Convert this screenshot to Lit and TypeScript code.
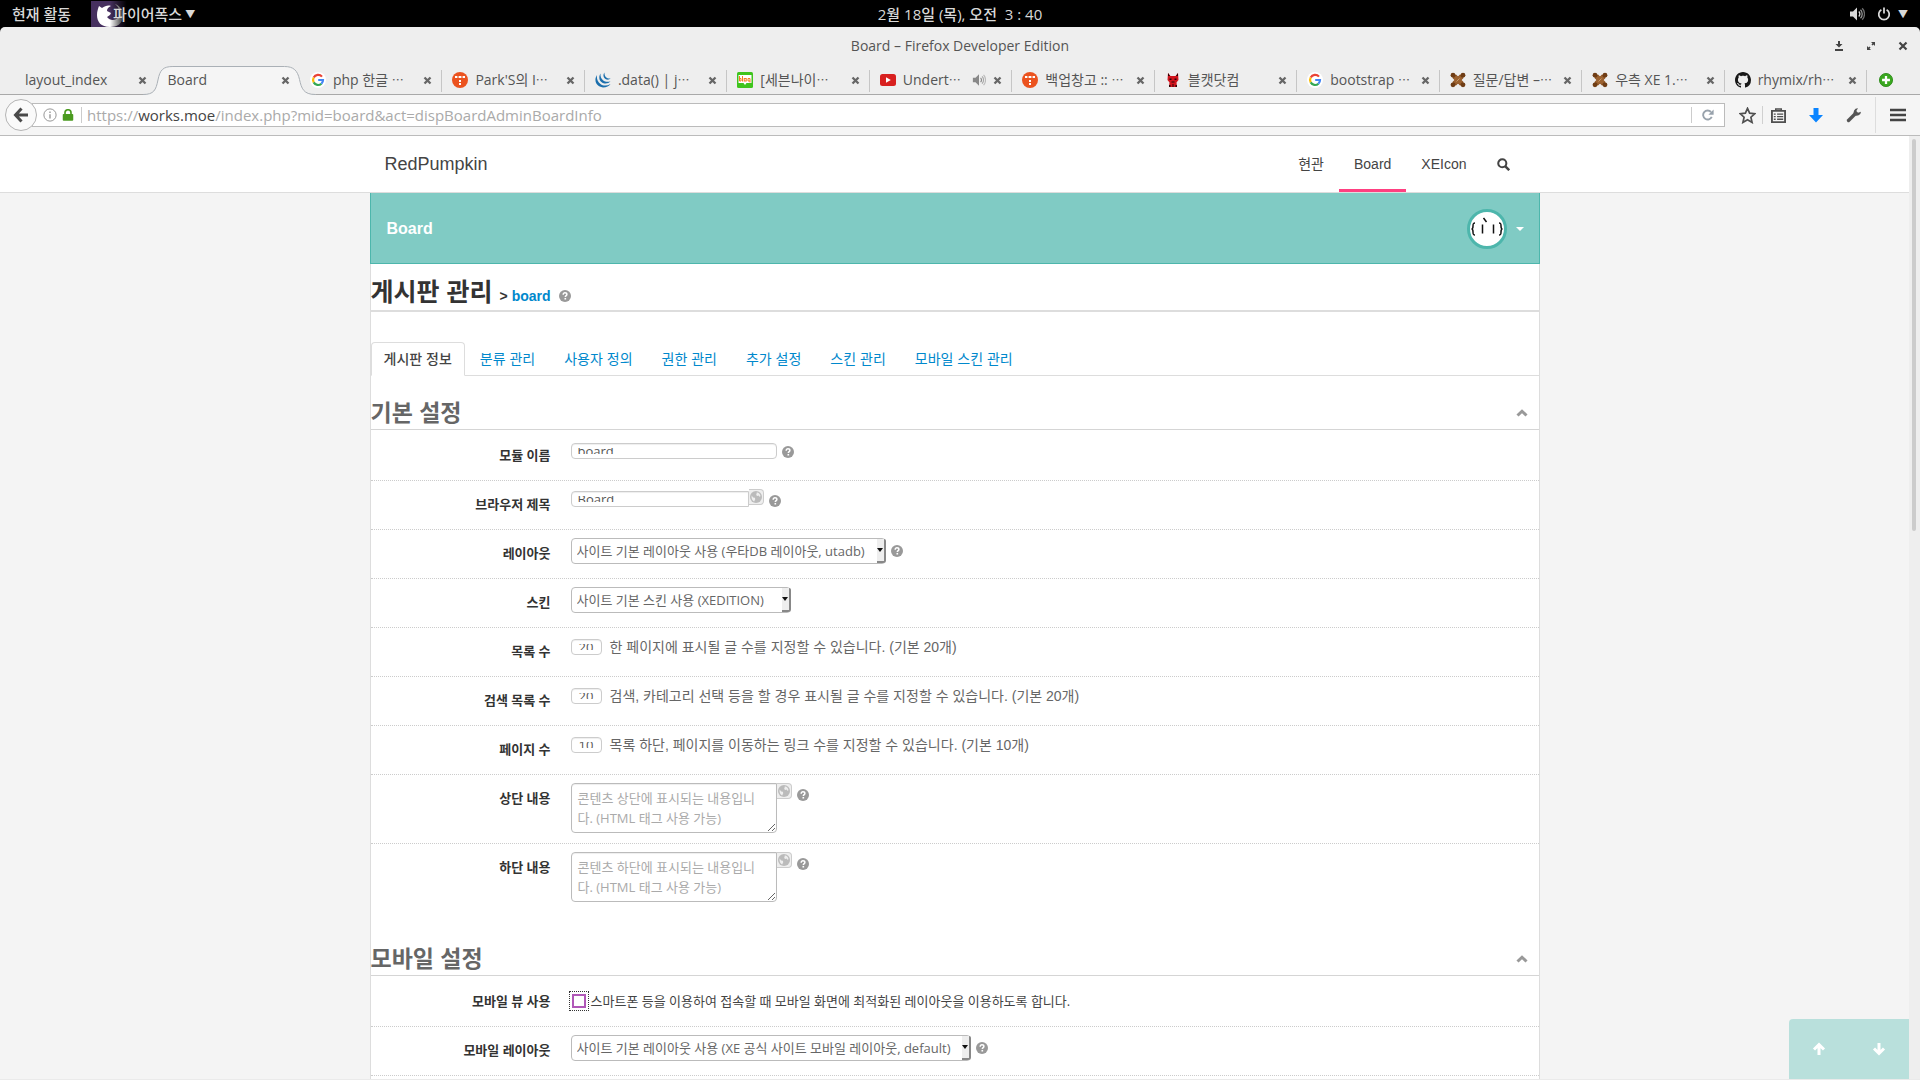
import { LitElement, html, css, svg, nothing, TemplateResult } from "lit";
import { customElement, property } from "lit/decorators.js";
import { classMap } from "lit/directives/class-map.js";

const icon = (size: number, body: unknown, box = 16) =>
  html`<svg width=${size} height=${size} viewBox="0 0 ${box} ${box}" aria-hidden="true">${body}</svg>`;

const googleIcon = icon(16, svg`
  <circle cx="8" cy="8" r="8" fill="#fff"/>
  <g fill="none" stroke-width="2.2">
    <path d="M12 4.6A5 5 0 0 0 3.7 5.6" stroke="#ea4335"/>
    <path d="M3.7 5.6a5 5 0 0 0 0 4.8" stroke="#fbbc05"/>
    <path d="M3.7 10.4A5 5 0 0 0 11.4 11.7" stroke="#34a853"/>
    <path d="M11.4 11.7A5 5 0 0 0 13 8H8.2" stroke="#4285f4"/>
  </g>`);

const tistoryIcon = icon(16, svg`
  <circle cx="8" cy="8" r="8" fill="#eb531f"/>
  <g fill="#fff"><rect x="3" y="4" width="2" height="2"/><rect x="7" y="4" width="2" height="2"/>
  <rect x="11" y="4" width="2" height="2"/><rect x="7" y="8" width="2" height="2"/>
  <rect x="7" y="11" width="2" height="2"/></g>
  <g fill="#fff" opacity=".4"><rect x="5" y="4" width="2" height="2"/><rect x="9" y="4" width="2" height="2"/></g>`);

const jqueryIcon = icon(16, svg`
  <g fill="#1b6fad">
    <path d="M2 3C-1.500 8 1 15 8 15.500c3.500 0 6-1.500 7.500-3.500C12 14 8 14 5.500 12 2.500 9.800 1.500 6.500 2 3z"/>
    <path d="M5.500 1.500C3 5.500 4.500 10.500 9.500 11.500c2.500.3 4.500-.5 6-2.200-2.500 1-5.500.7-7.500-1C6 6.500 5.200 4 5.500 1.500z"/>
    <path d="M9.500.500C7.500 3 8.500 6.500 11.500 7.500c1.700.4 3 0 4.200-1-1.700.3-3.500 0-4.700-1.200C9.800 4 9.300 2 9.500.500z"/>
  </g>`);

const blogIcon = icon(16, svg`
  <rect width="16" height="16" rx="1.500" fill="#3fc41d"/>
  <path d="M1.500 3h13v8H9.500L8 13 6.500 11h-5z" fill="#fff"/>
  <g fill="none" stroke="#f47a20" stroke-width="1"><path d="M2.500 4v5h1.500V6.500H2.500M5.500 4v5.500"/>
  <rect x="7.200" y="6.500" width="2" height="2.500"/><path d="M13 10.500V6.500h-2V9h2"/></g>`);

const youtubeIcon = icon(16, svg`
  <rect y="2" width="16" height="12" rx="2.500" fill="#d8201f"/><path d="M6 5.300v5.400L10.800 8z" fill="#fff"/>`);

const catIcon = icon(16, svg`
  <path d="M3 1l2.500 3h5L13 1l.5 7-2 2.500.5 4.500H4l.5-4.500L2.500 8z" fill="#d2141d"/>
  <path d="M3 1l2 3H3zM13 1l-2 3h2zM4.500 6.500h2v1.500h-2zM9.500 6.500h2v1.500h-2zM6.500 9.500h3v1h-3zM4 13h1.500v2H4zM10.500 13H12v2h-1.500zM7.500 12h1v3h-1z" fill="#2a0508"/>`);

const xeIcon = icon(16, svg`
  <path d="M4 4l8 8M12 4l-8 8" stroke="#8e5424" stroke-width="5"/>
  <g fill="#6f3d15"><circle cx="3" cy="3.200" r="2.400"/><circle cx="13" cy="3.200" r="2.400"/>
  <circle cx="3" cy="12.800" r="2.400"/><circle cx="13" cy="12.800" r="2.400"/></g>
  <path d="M5 5l6 6M11 5l-6 6" stroke="#9c6230" stroke-width="4"/>
  <path d="M6.500 9.500l3-3" stroke="#c89a6a" stroke-width="1"/>`);

const githubIcon = icon(16, svg`
  <path fill="#181818" d="M8 0C3.580 0 0 3.580 0 8c0 3.540 2.290 6.530 5.470 7.590.4.070.55-.17.55-.38 0-.19-.01-.82-.01-1.490-2.010.37-2.530-.49-2.690-.94-.09-.23-.48-.94-.82-1.130-.28-.15-.68-.52-.01-.53.63-.01 1.080.58 1.230.82.72 1.210 1.870.87 2.330.66.07-.52.28-.87.51-1.070-1.780-.2-3.640-.89-3.640-3.950 0-.87.31-1.590.82-2.150-.08-.2-.36-1.020.08-2.120 0 0 .67-.21 2.200.82.64-.18 1.320-.27 2-.27s1.360.09 2 .27c1.530-1.040 2.200-.82 2.200-.82.44 1.100.16 1.920.08 2.120.51.56.82 1.270.82 2.150 0 3.070-1.870 3.750-3.650 3.950.29.25.54.73.54 1.480 0 1.070-.01 1.930-.01 2.200 0 .21.15.46.55.38A8.010 8.010 0 0 0 16 8c0-4.420-3.580-8-8-8z"/>`);

const closeGlyph = icon(9, svg`<path d="M1.500 1.500l6 6M7.500 1.500l-6 6" stroke="#666" stroke-width="2.300"/>`, 9);

const speakerGlyph = (color: string, size: number) => icon(size, svg`
  <path d="M1 5.500h3L8 1.500v13L4 10.500H1z" fill=${color}/>
  <g fill="none" stroke=${color} stroke-width="1.300"><path d="M9.800 5.500a3.500 3.500 0 0 1 0 5"/>
  <path d="M11.500 3.800a6 6 0 0 1 0 8.400" opacity=".7"/><path d="M13.200 2.200a8.400 8.400 0 0 1 0 11.600" opacity=".5"/></g>`);

const helpGlyph = icon(12, svg`
  <circle cx="8" cy="8" r="8" fill="#999"/>
  <path d="M5.600 6.200C5.600 4.600 6.600 3.800 8 3.800s2.500.8 2.500 2.100c0 1.500-2.100 1.700-2.100 3.300" fill="none" stroke="#fff" stroke-width="2"/>
  <rect x="7.300" y="10.600" width="2.200" height="2.100" fill="#fff"/>`);

const globeGlyph = icon(12, svg`
  <circle cx="8" cy="8" r="8" fill="#bbb"/>
  <path d="M8.500 2.200l2-.2c2 1 3.300 2.800 3.500 5l-1.500.500-1-1.500-2 .500-1.500-1.500 1-1zM2.200 6l2 2.500 2.300.500.500 2-1.500 3C3 12.800 1.500 9.500 2.200 6z" fill="#eee"/>`);

interface TabInfo { title: string; more?: boolean; icon?: TemplateResult; active?: boolean; audio?: boolean; edge?: boolean }

const TABS: TabInfo[] = [
  { title: "layout_index", edge: true },
  { title: "Board", active: true, edge: true },
  { title: "php 한글 ", more: true, icon: googleIcon },
  { title: "Park'S의 I", more: true, icon: tistoryIcon },
  { title: ".data() | j", more: true, icon: jqueryIcon },
  { title: "[세븐나이", more: true, icon: blogIcon },
  { title: "Undert", more: true, icon: youtubeIcon, audio: true },
  { title: "백업창고 :: ", more: true, icon: tistoryIcon },
  { title: "블캣닷컴", icon: catIcon },
  { title: "bootstrap ", more: true, icon: googleIcon },
  { title: "질문/답변 –", more: true, icon: xeIcon },
  { title: "우측 XE 1.", more: true, icon: xeIcon },
  { title: "rhymix/rh", more: true, icon: githubIcon },
];

const reset = css`
  * { box-sizing: border-box; }
  svg { display: block; flex: none; }
  button { border: 0; padding: 0; background: none; font: inherit; color: inherit; display: flex; align-items: center; justify-content: center; }
  a { color: inherit; text-decoration: none; }
`;

@customElement("desktop-bar")
class DesktopBar extends LitElement {
  static styles = [reset, css`
    :host { display: grid; grid-template-columns: 1fr auto 1fr; align-items: center; height: 27px; background: #000; color: #d8d8d8;
      font: 500 15px/26px "Open Sans", "Noto Sans CJK KR", sans-serif; }
    .left, .right { display: flex; align-items: center; }
    .left { padding-left: 12px; gap: 20px; }
    .app { position: relative; padding-left: 22px; gap: 3px; height: 26px; }
    .app svg { position: absolute; left: 0; top: 0; }
    .label { position: relative; }
    .small { font-size: 10px; }
    .right { justify-content: flex-end; gap: 7px; padding-right: 12px; }
    .volume { margin-right: 5px; }
    .clock { white-space: pre; }
  `];
  render() {
    return html`
      <div class="left">
        <button>현재 활동</button>
        <button class="app">
          <svg width="42" height="26" viewBox="0 0 42 26" aria-hidden="true">
            <defs><linearGradient id="fade"><stop offset=".45" stop-color="#000" stop-opacity="0"/><stop offset=".85" stop-color="#000"/></linearGradient></defs>
            <rect width="36" height="26" fill="#46305f"/>
            <path d="M8 5l3 2c3-2 6-3 9-2-3 1-4 3-4 5l4 2c-1 3-3 3-4 4 3 4 8 4 12 0 1-6 0-10-4-13 6 2 9 8 8 13-1 7-6 10-13 10C10 26 6 21 6 14c0-4 1-6 2-9z" fill="#fff"/>
            <rect width="42" height="26" fill="url(#fade)"/>
          </svg>
          <span class="label">파이어폭스</span><span class="label small">▼</span>
        </button>
      </div>
      <time class="clock">2월 18일 (목), 오전  3 : 40</time>
      <div class="right">
        <span class="volume">${speakerGlyph("#d8d8d8", 16)}</span>
        ${icon(14, svg`<path d="M5 3.200a6 6 0 1 0 6 0M8 .5v7" fill="none" stroke="#d8d8d8" stroke-width="2"/>`)}
        <span class="small">▼</span>
      </div>`;
  }
}

@customElement("browser-tab")
class BrowserTab extends LitElement {
  @property({ attribute: false }) info!: TabInfo;
  static styles = [reset, css`
    :host { flex: 1 1 0; min-width: 0; display: block; position: relative; color: #555; font: 14px/28px "Open Sans", "Noto Sans CJK KR", sans-serif; }
    .tab { position: relative; display: flex; align-items: center; gap: 7px; height: 28px; padding: 0 10px; }
    .tab::after { content: ""; position: absolute; right: 0; top: 4px; bottom: 2px; width: 1px; background: #c6c6c6; }
    .edge::after { display: none; }
    .title { flex: 1; min-width: 0; white-space: pre; }
    .more { font-family: "Noto Sans CJK KR", sans-serif; font-size: 12px; }
    .shape { position: absolute; left: -14px; top: 0; width: calc(100% + 30px); height: 29px; }
  `];
  render() {
    const t = this.info;
    return html`
      ${t.active ? html`<svg class="shape" viewBox="0 0 173 29" preserveAspectRatio="none" aria-hidden="true">
        <path d="M0 29v-.5C11 28.500 13 24 15 14S20 .5 30 .5h112c9 0 13 4 15 13s4 15 16 15V29z" fill="#f5f5f5"/>
        <path d="M0 28.500C11 28.500 13 24 15 14S20 .5 30 .5h112c9 0 13 4 15 13s4 15 16 15" fill="none" stroke="#aab0b6"/></svg>` : nothing}
      <div class=${classMap({ tab: true, edge: !!t.edge })}>
        ${t.icon ?? nothing}
        <span class="title">${t.title}${t.more ? html`<span class="more" lang="ko">⋯</span>` : nothing}</span>
        ${t.audio ? speakerGlyph("#888", 14) : nothing}
        <button aria-label="탭 닫기">${closeGlyph}</button>
      </div>`;
  }
}

@customElement("browser-chrome")
class BrowserChrome extends LitElement {
  static styles = [reset, css`
    :host { display: block; background: #000; font-family: "Open Sans", "Noto Sans CJK KR", sans-serif; color: #555; }
    .window { background: #eee; border-radius: 5px 5px 0 0; }
    .titlebar { display: grid; grid-template-columns: 1fr auto 1fr; align-items: center; height: 39px; font-size: 14px; line-height: 36px; padding: 0 12px 2px; }
    .controls { grid-column: 3; display: flex; justify-content: flex-end; gap: 22px; }
    .caption { grid-column: 2; }
    .strip { display: flex; height: 29px; padding-left: 15px; border-bottom: 1px solid #a9a9a9; }
    .tabs { display: flex; flex: 1; min-width: 0; height: 29px; }
    .new { width: 38px; height: 28px; }
    .gap { width: 15px; }
    .toolbar { display: flex; align-items: center; height: 41px; padding: 0 15px 0 5px; background: #f5f5f5; border-bottom: 1px solid #bbb; }
    .back { position: relative; z-index: 1; width: 32px; height: 32px; border: 1px solid #b4b4b4; border-radius: 50%; background: #fafafa; }
    .address { flex: 1; display: flex; align-items: center; gap: 5px; height: 24px; margin-left: -5px; padding-left: 10px; background: #fff; border: 1px solid #bbb; font-size: 15px; line-height: 22px; color: #aaa; }
    .url { flex: 1; margin-left: 2px; padding-left: 5px; border-left: 1px solid #ccc; line-height: 16px; }
    .host { color: #444; }
    .reload { width: 33px; height: 16px; border-left: 1px solid #ccc; }
    .tools { display: flex; align-items: center; }
    .tool { width: 38px; height: 28px; }
    .star { width: 30px; margin-left: 7px; }
    .list { width: 32px; border-left: 1px solid #d0d0d0; height: 18px; margin-right: 3px; }
    .menu { width: 30px; height: 36px; border-left: 1px solid #ddd; padding-left: 14px; margin-left: 2px; }
  `];
  render() {
    return html`<div class="window">
      <div class="titlebar">
        <span class="caption">Board – Firefox Developer Edition</span>
        <div class="controls">
          <button aria-label="최소화">${icon(10, svg`<path d="M4 0h2v3h2.500L5 6.500 1.500 3H4zM1 8h8v2H1z" fill="#444"/>`, 10)}</button>
          <button aria-label="복원">${icon(10, svg`<path d="M5 1h4v4zM1 5v4h4z" fill="#444"/><path d="M8 2L6 4M2 8l2-2" stroke="#444" stroke-width="1.500"/>`, 10)}</button>
          <button aria-label="닫기">${icon(10, svg`<path d="M1.500 1.500l7 7M8.500 1.500l-7 7" stroke="#444" stroke-width="2.200"/>`, 10)}</button>
        </div>
      </div>
      <div class="strip">
        <div class="tabs">${TABS.map((t) => html`<browser-tab .info=${t}></browser-tab>`)}</div>
        <button class="new" aria-label="새 탭">${icon(14, svg`<circle cx="8" cy="8" r="7.500" fill="#3aa820" stroke="#2b8a18"/><path d="M8 3.500v9M3.500 8h9" stroke="#fff" stroke-width="2.600"/>`)}</button>
        <span class="gap"></span>
      </div>
      <div class="toolbar">
        <button class="back" aria-label="뒤로">${icon(16, svg`<path d="M8.500 1.500L2.500 8l6 6.500M3 8h12" fill="none" stroke="#4a4a4a" stroke-width="3"/>`)}</button>
        <div class="address">
          ${icon(14, svg`<circle cx="8" cy="8" r="7" fill="none" stroke="#888"/><path d="M8 7v5M8 4v1.600" stroke="#888" stroke-width="1.400"/>`)}
          ${icon(12, svg`<rect x="1" y="6.500" width="14" height="9" rx="1.200" fill="#4b9b20"/><path d="M4 7V5a4 4 0 0 1 8 0v2" fill="none" stroke="#4b9b20" stroke-width="2.200"/>`)}
          <span class="url">https://<span class="host">works.moe</span>/index.php?mid=board&amp;act=dispBoardAdminBoardInfo</span>
          <button class="reload" aria-label="새로 고침">${icon(12, svg`<path d="M13 10.500A6 6 0 1 1 12 4" fill="none" stroke="#98a2ac" stroke-width="2.500"/><path d="M15.500.5v7h-7z" fill="#98a2ac"/>`)}</button>
        </div>
        <div class="tools">
          <button class="star" aria-label="북마크">${icon(17, svg`<path d="M8 1.300l2 4.500 4.900.5-3.700 3.300 1.100 4.900L8 12l-4.300 2.500 1.100-4.900L1.100 6.300 6 5.800z" fill="none" stroke="#505050" stroke-width="1.600"/>`)}</button>
          <button class="list" aria-label="북마크 목록">${icon(15, svg`<path d="M1 3h14v12H1z" fill="none" stroke="#505050" stroke-width="2"/><path d="M5 3V1h6v2M3 6.500h2M6.500 6.500H13M3 9.200h2M6.500 9.200H13M3 12h2M6.500 12H13" fill="none" stroke="#505050" stroke-width="1.500"/>`)}</button>
          <button class="tool" aria-label="다운로드">${icon(16, svg`<path d="M5.500 1h5v7H15l-7 7.500L1 8h4.500z" fill="#0a84ff"/>`)}</button>
          <button class="tool" aria-label="개발자 도구">${icon(16, svg`<path d="M2.500 13.500l7-7" stroke="#555" stroke-width="3.400" stroke-linecap="round"/><path d="M15 4.800a4.200 4.200 0 0 1-6.600 3.200A4.200 4.200 0 0 1 12 1.300L10.300 4l1.700 1.800z" fill="#555"/>`)}</button>
          <button class="menu" aria-label="메뉴">${icon(16, svg`<path d="M0 3h16M0 8h16M0 13h16" stroke="#444" stroke-width="2.600"/>`)}</button>
        </div>
      </div>
    </div>`;
  }
}

@customElement("setting-row")
class SettingRow extends LitElement {
  @property() label = "";
  @property() kind = "text";
  @property() value = "";
  @property() note = "";
  @property({ type: Boolean }) help = false;
  @property({ type: Boolean }) first = false;
  @property({ type: Boolean }) last = false;

  static styles = [reset, css`
    :host { display: block; font: 13px/20px "Open Sans", "Noto Sans CJK KR", sans-serif; color: #666; }
    .row { display: grid; grid-template-columns: 180px 1fr; column-gap: 20px; min-height: 49px; border-bottom: 1px dotted #ccc; }
    .first { padding: 1px 0; min-height: 51px; }
    .last { border-bottom-color: transparent; }
    .name { padding-top: 13px; text-align: right; font-weight: 700; color: #333; }
    .first .name { padding-top: 14px; }
    .field { display: flex; align-items: flex-start; padding: 8px 0 10px; }
    .box { width: 206px; height: 16px; margin-top: 4px; padding: 4px 6px; border: 1px solid #ccc; border-radius: 4px; background: #fff; box-shadow: inset 0 1px 1px #eee; display: flex; }
    .box input { display: block; width: 100%; height: 6px; border: 0; padding: 0; margin: 0; outline: 0; background: none; font: 13px/6px "Open Sans", sans-serif; color: #555; overflow: hidden; }
    .titled { width: 178px; margin-top: 2px; border-radius: 4px 0 0 4px; }
    .count { width: 31px; margin: 3px 8px 0 0; }
    .count input { text-align: center; }
    .lang { width: 15px; height: 16px; border: 1px solid #ccc; border-left: 0; background: #eee; border-radius: 0 4px 4px 0; }
    .help { margin: 7px 0 0 5px; }
    .lang + .help { margin-top: 6px; }
    .drop { position: relative; display: flex; }
    select { appearance: none; height: 26px; min-width: 220px; margin: 0; padding: 0 19px 0 5px; border: 1px solid #bbb; border-radius: 4px; background: #fff; color: #666; font: 13px/24px "Open Sans", "Noto Sans CJK KR", sans-serif; }
    .arrow { position: absolute; right: 0; top: 1px; bottom: 1px; width: 9px; border-right: 2px solid #888; border-bottom: 2px solid #888; border-radius: 0 2px 3px 0; background: #eee; display: flex; align-items: center; pointer-events: none; }
    textarea { width: 206px; height: 50px; margin: 0; padding: 4px 6px; border: 1px solid #bbb; border-radius: 4px 0 4px 4px; box-shadow: inset 0 1px 1px #eee; font: 13px/20px "Open Sans", "Noto Sans CJK KR", sans-serif; overflow: hidden; display: block; }
    textarea::placeholder { color: #aaa; opacity: 1; }
    .note { font: 14px/22px "Liberation Sans", "Noto Sans CJK KR", sans-serif; color: #666; }
    .check { display: flex; align-items: center; gap: 2px; margin: 6px 0 0 -2px; color: #444; }
    .check input { appearance: none; width: 14px; height: 14px; margin: 3px; border: 2px solid #b158b8; background: #fff; outline: 1px dotted #333; outline-offset: 2px; }
  `];

  private control() {
    switch (this.kind) {
      case "select":
        return html`<div class="drop"><select id="field"><option>${this.value}</option></select>
          <span class="arrow">${icon(6, svg`<path d="M0 1h6L3 5z" fill="#111"/>`, 6)}</span></div>`;
      case "area":
        return html`<textarea id="field" placeholder=${this.value}></textarea>
          <button class="lang" aria-label="언어별 입력">${globeGlyph}</button>`;
      case "check":
        return html`<div class="check"><input type="checkbox" id="field"><span>${this.note}</span></div>`;
      case "titled":
        return html`<div class="box titled"><input id="field" .value=${this.value}></div>
          <button class="lang" aria-label="언어별 입력">${globeGlyph}</button>`;
      case "count":
        return html`<div class="box count"><input id="field" .value=${this.value}></div><span class="note">${this.note}</span>`;
      default:
        return html`<div class="box"><input id="field" .value=${this.value}></div>`;
    }
  }

  render() {
    return html`<div class=${classMap({ row: true, first: this.first, last: this.last })}>
      <label class="name" for="field">${this.label}</label>
      <div class="field">${this.control()}${this.help ? html`<button class="help" aria-label="도움말">${helpGlyph}</button>` : nothing}</div>
    </div>`;
  }
}

@customElement("board-page")
class BoardPage extends LitElement {
  static styles = [reset, css`
    :host { display: flex; position: relative; overflow: hidden; background: #f4f4f4; border-bottom: 1px solid #eaeaea; color: #333;
      font: 14px/20px "Liberation Sans", "Noto Sans CJK KR", sans-serif; }
    .page { flex: 1; min-width: 0; }
    .scroll { width: 11px; background: #eee; padding: 3px 4px 0 3px; }
    .thumb { height: 392px; border-radius: 2px; background: #ccc; }
    .header { background: #fff; border-bottom: 1px solid #ddd; }
    .inner { display: flex; justify-content: space-between; max-width: 1170px; height: 56px; margin: 0 auto; padding: 0 15px; color: #444; }
    .brand { font-size: 18px; line-height: 56px; }
    .nav { display: flex; }
    .nav a { display: flex; align-items: center; height: 56px; padding: 3px 15px 0; border-bottom: 3px solid transparent; }
    .nav .current { border-bottom-color: #ff4081; }
    .card { max-width: 1170px; margin: 0 auto; padding-bottom: 40px; background: #fff; border: solid #ddd; border-width: 0 1px; }
    .banner { display: flex; align-items: center; justify-content: space-between; height: 71px; margin: 0 -1px; padding: 2px 14px 0 16px; background: #80cbc4; border: 1px solid #4db6ac; border-top: 0; color: #fff; font-size: 16px; font-weight: 700; }
    .user { display: flex; align-items: center; gap: 8px; }
    .heading { display: flex; align-items: baseline; height: 48px; margin: 0; border-bottom: 2px solid #ddd; font-size: 25px; line-height: 56px; font-weight: 700; }
    .heading small { display: flex; align-items: center; gap: 4px; margin-left: 7px; font-size: 14px; line-height: 20px; }
    .heading a { color: #08c; }
    .heading button { margin-left: 4px; }
    .tabs { display: flex; gap: 1px; margin-top: 30px; height: 34px; border-bottom: 1px solid #ddd; }
    .tabs a { height: 33px; padding: 0 13px; border: 1px solid transparent; color: #08c; line-height: 32px; }
    .tabs .on { height: 34px; padding: 0 12px; border-color: #ddd; border-bottom-color: #fff; border-radius: 4px 4px 0 0; background: #fff; color: #444; font-weight: 500; }
    .section { margin: 0; display: flex; align-items: center; justify-content: space-between; height: 35px; border-bottom: 1px solid #d5d5d5; padding: 2px 11px 0 0; font-size: 23px; font-weight: 700; line-height: 32px; color: #666; }
    .basic { margin-top: 19px; }
    .mobile { margin-top: 28px; }
    .jump { position: absolute; right: 11px; bottom: 0; display: flex; width: 120px; height: 60px; background: #b9e0dc; border-radius: 4px 0 0 0; }
    .jump button { flex: 1; }
  `];
  render() {
    const chevron = icon(12, svg`<path d="M1.500 8.500L6 4.200l4.500 4.300" fill="none" stroke="#999" stroke-width="3"/>`, 12);
    return html`
      <div class="page">
        <header class="header"><div class="inner">
          <a class="brand" href="#">RedPumpkin</a>
          <nav class="nav"><a href="#">현관</a><a class="current" href="#">Board</a><a href="#">XEIcon</a>
            <a href="#" aria-label="검색">${icon(13, svg`<circle cx="6.500" cy="6.500" r="5" fill="none" stroke="#444" stroke-width="2.500"/><path d="M10 10l5 5" stroke="#444" stroke-width="3"/>`)}</a></nav>
        </div></header>
        <main class="card">
          <div class="banner"><span>Board</span>
            <div class="user">
              <svg width="40" height="40" viewBox="0 0 40 40" aria-hidden="true"><circle cx="20" cy="20" r="18.500" fill="#fff" stroke="#4db6ac" stroke-width="3"/>
                <path d="M8 14c-2 0-2 1-2 3s0 3-1.500 3c1.500 0 1.500 1 1.500 3s0 3 2 3M32 14c2 0 2 1 2 3s0 3 1.500 3c-1.500 0-1.500 1-1.500 3s0 3-2 3M15.500 15.500v9M26.500 15.500v9M16.500 9l3 4" fill="none" stroke="#111" stroke-width="1.500"/></svg>
              ${icon(10, svg`<path d="M1 3h8L5 7z" fill="#fff"/>`, 10)}
            </div></div>
          <h1 class="heading">게시판 관리 <small>&gt; <a href="#">board</a><button aria-label="도움말">${helpGlyph}</button></small></h1>
          <nav class="tabs"><a class="on" href="#">게시판 정보</a>${["분류 관리", "사용자 정의", "권한 관리", "추가 설정", "스킨 관리", "모바일 스킨 관리"].map((t) => html`<a href="#">${t}</a>`)}</nav>
          <h2 class="section basic">기본 설정<button aria-label="접기">${chevron}</button></h2>
          <setting-row first label="모듈 이름" value="board" help></setting-row>
          <setting-row label="브라우저 제목" kind="titled" value="Board" help></setting-row>
          <setting-row label="레이아웃" kind="select" value="사이트 기본 레이아웃 사용 (우타DB 레이아웃, utadb)" help></setting-row>
          <setting-row label="스킨" kind="select" value="사이트 기본 스킨 사용 (XEDITION)"></setting-row>
          <setting-row label="목록 수" kind="count" value="20" note="한 페이지에 표시될 글 수를 지정할 수 있습니다. (기본 20개)"></setting-row>
          <setting-row label="검색 목록 수" kind="count" value="20" note="검색, 카테고리 선택 등을 할 경우 표시될 글 수를 지정할 수 있습니다. (기본 20개)"></setting-row>
          <setting-row label="페이지 수" kind="count" value="10" note="목록 하단, 페이지를 이동하는 링크 수를 지정할 수 있습니다. (기본 10개)"></setting-row>
          <setting-row label="상단 내용" kind="area" value="콘텐츠 상단에 표시되는 내용입니다. (HTML 태그 사용 가능)" help></setting-row>
          <setting-row last label="하단 내용" kind="area" value="콘텐츠 하단에 표시되는 내용입니다. (HTML 태그 사용 가능)" help></setting-row>
          <h2 class="section mobile">모바일 설정<button aria-label="접기">${chevron}</button></h2>
          <setting-row first label="모바일 뷰 사용" kind="check" note="스마트폰 등을 이용하여 접속할 때 모바일 화면에 최적화된 레이아웃을 이용하도록 합니다."></setting-row>
          <setting-row label="모바일 레이아웃" kind="select" value="사이트 기본 레이아웃 사용 (XE 공식 사이트 모바일 레이아웃, default)" help></setting-row>
        </main>
      </div>
      <div class="scroll"><div class="thumb"></div></div>
      <div class="jump">
        <button aria-label="맨 위로">${icon(14, svg`<path d="M7 13V3M2 7.500l5-5 5 5" fill="none" stroke="#fff" stroke-width="3"/>`, 14)}</button>
        <button aria-label="맨 아래로">${icon(14, svg`<path d="M7 1v10M2 6.500l5 5 5-5" fill="none" stroke="#fff" stroke-width="3"/>`, 14)}</button>
      </div>`;
  }
}

@customElement("app-root")
class AppRoot extends LitElement {
  static styles = css`
    :host { display: flex; flex-direction: column; height: 100vh; overflow: hidden; }
    .bar, .chrome { flex: none; }
    .view { flex: 1; min-height: 0; }
  `;
  render() {
    return html`<desktop-bar class="bar"></desktop-bar><browser-chrome class="chrome"></browser-chrome><board-page class="view"></board-page>`;
  }
}
